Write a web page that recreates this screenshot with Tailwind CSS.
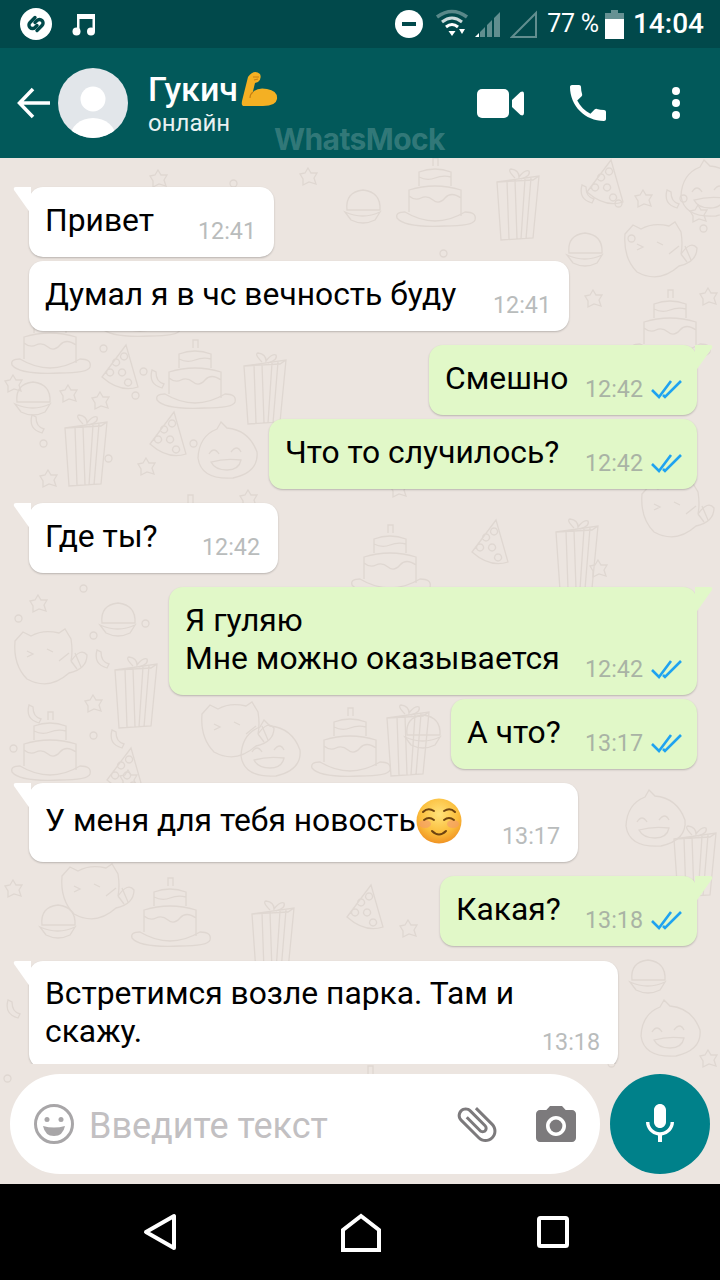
<!DOCTYPE html>
<html lang="ru">
  <head>
    <meta charset="UTF-8" />
    <meta name="viewport" content="width=device-width, initial-scale=1.0" />
    <title>WhatsMock</title>
    <script src="https://cdn.jsdelivr.net/npm/@tailwindcss/browser@4"></script>
  </head>
  <body class="w-[720px] h-[1280px] overflow-hidden flex flex-col bg-black font-[Roboto,sans-serif] text-black">
    <!-- status bar -->
    <div class="h-[48px] shrink-0 bg-[#01494b] flex items-center justify-between text-white">
      <div class="flex items-center pl-[20px]">
        <svg class="w-[32px] h-[32px]" viewBox="0 0 32 32" fill="none">
          <circle cx="16" cy="16" r="16" fill="#fff" />
          <path d="M15 9.500 10 14.500a3.500 3.500 0 0 0 0 5 3.500 3.500 0 0 0 5 0l2-2" stroke="#01494b" stroke-width="3.400" stroke-linecap="round" />
          <path d="M17 22.500 22 17.500a3.500 3.500 0 0 0 0-5 3.500 3.500 0 0 0-5 0l-2 2" stroke="#01494b" stroke-width="3.400" stroke-linecap="round" />
        </svg>
        <svg class="w-[24px] h-[24px] ml-[20px]" viewBox="0 0 24 24" fill="#fff">
          <path d="M5 2h18v17h-2.500V7H7.500v12H5z" />
          <circle cx="4.500" cy="19.500" r="4" />
          <circle cx="19" cy="19.500" r="4" />
        </svg>
      </div>
      <div class="flex items-center pr-[16px]">
        <svg class="w-[28px] h-[28px]" viewBox="0 0 28 28">
          <circle cx="14" cy="14" r="14" fill="#fff" />
          <rect x="7" y="12" width="14" height="4" fill="#01494b" />
        </svg>
        <svg class="w-[34px] h-[30px] ml-[12px]" viewBox="0 0 34 30" fill="none" stroke="#fff">
          <path d="M2 8Q17-3 32 8" stroke-width="3.500" stroke-opacity=".35" />
          <path d="M7 13Q17 5 27 13" stroke-width="3" stroke-opacity=".8" />
          <path d="M11 18Q17 13 23 18" stroke-width="3" />
          <path d="M13.500 22h7L17 27z" fill="#fff" stroke="none" />
          <path d="M24 20h6l-3 5z" fill="#fff" stroke="none" />
        </svg>
        <svg class="w-[30px] h-[30px] ml-[3px]" viewBox="0 0 30 30">
          <path d="M3 28h4v-4z" fill="#fff" />
          <path d="M8 28v-5l5-5v10zM15 28V16l5-5v17zM22 28V9l6-6v25z" fill="#fff" fill-opacity=".38" />
        </svg>
        <svg class="w-[28px] h-[30px] ml-[8px]" viewBox="0 0 28 30" fill="none">
          <path d="M2 28 26 4v24z" stroke="#fff" stroke-opacity=".38" stroke-width="2" />
        </svg>
        <span class="text-[25px] leading-[30px] ml-[9px] tracking-[-0.2px] whitespace-nowrap">77 %</span>
        <svg class="w-[19px] h-[29px] ml-[6px]" viewBox="0 0 19 29">
          <path d="M6 0h7v3h6v6H0V3h6z" fill="#fff" fill-opacity=".4" />
          <rect y="9" width="19" height="20" fill="#fff" />
        </svg>
        <span class="text-[28px] leading-[34px] font-medium ml-[9px]">14:04</span>
      </div>
    </div>

    <!-- header -->
    <div class="relative h-[110px] shrink-0 bg-[#02595a] flex items-center text-white">
      <svg class="w-[34px] h-[32px] ml-[17px] shrink-0" viewBox="0 0 34 32" fill="none" stroke="#fff" stroke-width="3.500">
        <path d="M33 16H3M16 2 2.500 16 16 30" />
      </svg>
      <svg class="w-[70px] h-[70px] ml-[7px] shrink-0" viewBox="0 0 70 70">
        <clipPath id="avatar"><circle cx="35" cy="35" r="35" /></clipPath>
        <circle cx="35" cy="35" r="35" fill="#e2e6ea" />
        <circle cx="35" cy="31" r="12.500" fill="#fff" />
        <ellipse cx="35" cy="70" rx="23" ry="20" fill="#fff" clip-path="url(#avatar)" />
      </svg>
      <div class="ml-[20px]">
        <div class="flex items-center h-[40px] text-[34px] leading-[40px] font-medium">
          Гукич
          <svg class="w-[38px] h-[38px] -mt-[3px] ml-[3px] shrink-0" viewBox="0 0 38 38">
            <path d="M7 8Q13 0 19 5 21 10 17 13L14 14Q12 22 12 23 17 18 26 20 37 22 36 30 35 37 22 37H3Q0 37 1 32Z" fill="#f4b023" />
            <path d="M12 8h6M13 11l4-1M12 23q-3 2-3 6" stroke="#c77f12" stroke-width="1.200" fill="none" />
          </svg>
        </div>
        <div class="text-[24px] leading-[28px] text-[#e9f1f1]">онлайн</div>
      </div>
      <svg class="w-[47px] h-[29px] ml-auto shrink-0" viewBox="0 0 47 29" fill="#fff">
        <rect width="32" height="29" rx="5" />
        <path d="M35 11 43.500 3Q47 1.500 47 5v19q0 3.500-3.500 2L35 18Z" />
      </svg>
      <svg class="w-[48px] h-[48px] ml-[40px] shrink-0" viewBox="0 0 24 24" fill="#fff">
        <path d="M6.620 10.790c1.440 2.830 3.760 5.140 6.590 6.590l2.200-2.200c.27-.27.67-.36 1.020-.24 1.120.37 2.330.57 3.570.57.55 0 1 .45 1 1V20c0 .55-.45 1-1 1-9.390 0-17-7.610-17-17 0-.55.45-1 1-1h3.500c.55 0 1 .45 1 1 0 1.250.2 2.450.57 3.570.11.350.03.74-.25 1.020l-2.200 2.200z" />
      </svg>
      <svg class="w-[10px] h-[34px] ml-[59px] mr-[39px] shrink-0" viewBox="0 0 10 34" fill="#fff">
        <circle cx="5" cy="5" r="4" />
        <circle cx="5" cy="17" r="4" />
        <circle cx="5" cy="29" r="4" />
      </svg>
      <span class="absolute left-[274px] top-[73px] text-[30px] leading-[36px] font-bold font-[Inter,sans-serif] tracking-[-0.6px] text-white/20">WhatsMock</span>
    </div>

    <!-- chat -->
    <div class="relative h-[1026px] shrink-0 bg-[#ece5e0] flex flex-col overflow-hidden">
      <!-- wallpaper doodles -->
      <svg class="absolute inset-0 w-[720px] h-[1026px]" viewBox="0 158 720 1026" fill="none" stroke="#dfd7d1" stroke-width="1.300">
        <defs>
          <g id="cake">
            <path d="M2 60Q0 54 10 54 40 72 70 54 82 54 80 62 78 68 50 68 10 70 2 60Z" />
            <path d="M14 54V32Q40 24 66 32V58M14 38q6 5 12 2t12 2 12-2 16 0M24 28V14Q40 8 56 14V28M24 19q8 4 16 1t16-1M38 8V0h5v8" />
          </g>
          <g id="gift">
            <path d="M2 14 44 8 38 70 6 72ZM12 13 14 71M20 12 22 71M30 11 26 71M36 10 31 71M2 14 38 12 44 8" />
            <path d="M20 10Q12 2 16 1 24 2 24 9 30 1 34 3 36 8 26 11" />
          </g>
          <g id="cat">
            <path d="M2 14 10 5 18 9Q30 2 46 6L52 2 58 12Q60 24 58 34 68 20 74 28 74 42 56 46 36 64 14 52 0 38 2 14Z" />
            <path d="M14 24l6 3-6 3M34 22l6 3M46 34l10-8M58 34l6 8M62 26l6 14" />
          </g>
          <g id="hat">
            <path d="M26 0 38 42Q20 48 2 32ZM16 14a3.500 3.500 0 1 0 .1 0M24 8a3.500 3.500 0 1 0 .1 0M10 24a3.500 3.500 0 1 0 .1 0M22 24a3.500 3.500 0 1 0 .1 0M28 34a3.500 3.500 0 1 0 .1 0" />
          </g>
          <g id="face">
            <path d="M24 0 30 6Q52 8 60 30 62 50 36 56 4 58 1 36 2 14 20 7Z" />
            <path d="M12 32q5-8 10 0M34 30q6-8 10 0M14 40q14-4 30-2-2 10-14 10T14 40Z" />
          </g>
          <g id="burger">
            <path d="M2 20Q0 2 18 0 36 2 35 20ZM0 22Q18 30 35 22L30 30Q18 36 6 30Z" />
          </g>
          <g id="star">
            <path d="M8 0 11 5 17 5 14 10 16 16 9 14 3 17 3 11 0 6 5 5Z" />
          </g>
          <g id="dot"><circle cx="3.500" cy="3.500" r="3.500" /></g>
          <g id="moon"><path d="M2 0Q-2 14 12 18L14 14Q6 12 6 2Z" /></g>
        </defs>
        <use href="#cake" x="10" y="305" /><use href="#hat" x="100" y="345" /><use href="#cake" x="155" y="340" /><use href="#gift" x="242" y="352" />
        <use href="#burger" x="15" y="382" /><use href="#gift" x="63" y="414" /><use href="#hat" x="148" y="412" /><use href="#face" x="197" y="422" />
        <use href="#cake" x="150" y="495" /><use href="#cat" x="13" y="627" /><use href="#burger" x="100" y="603" /><use href="#gift" x="113" y="656" />
        <use href="#cake" x="10" y="712" /><use href="#hat" x="105" y="748" /><use href="#cake" x="310" y="708" /><use href="#gift" x="385" y="704" />
        <use href="#cat" x="200" y="700" /><use href="#face" x="240" y="720" /><use href="#burger" x="405" y="715" /><use href="#burger" x="567" y="233" />
        <use href="#cat" x="623" y="220" /><use href="#cake" x="630" y="290" /><use href="#face" x="680" y="160" /><use href="#hat" x="585" y="160" />
        <use href="#cake" x="395" y="158" /><use href="#gift" x="495" y="168" /><use href="#cat" x="285" y="262" /><use href="#hat" x="425" y="268" />
        <use href="#burger" x="345" y="190" /><use href="#cake" x="100" y="268" /><use href="#gift" x="554" y="518" /><use href="#hat" x="470" y="520" />
        <use href="#cat" x="640" y="480" /><use href="#cake" x="350" y="525" /><use href="#face" x="625" y="790" /><use href="#gift" x="672" y="825" />
        <use href="#cake" x="130" y="878" /><use href="#burger" x="40" y="905" /><use href="#gift" x="250" y="900" /><use href="#hat" x="345" y="885" />
        <use href="#cat" x="60" y="862" /><use href="#face" x="640" y="1000" /><use href="#burger" x="630" y="960" /><use href="#cake" x="330" y="1066" />
        <use href="#star" x="5" y="375" /><use href="#star" x="60" y="385" /><use href="#star" x="92" y="392" /><use href="#star" x="138" y="458" />
        <use href="#star" x="40" y="470" /><use href="#star" x="85" y="695" /><use href="#star" x="30" y="595" /><use href="#star" x="635" y="190" />
        <use href="#star" x="690" y="205" /><use href="#star" x="585" y="290" /><use href="#star" x="700" y="288" /><use href="#star" x="300" y="168" />
        <use href="#star" x="150" y="170" /><use href="#star" x="240" y="490" /><use href="#star" x="390" y="480" /><use href="#star" x="590" y="560" />
        <use href="#star" x="120" y="770" /><use href="#star" x="5" y="880" /><use href="#star" x="400" y="920" /><use href="#star" x="700" y="1050" />
        <use href="#moon" x="150" y="370" /><use href="#moon" x="30" y="415" /><use href="#moon" x="27" y="705" /><use href="#moon" x="95" y="650" />
        <use href="#moon" x="665" y="190" /><use href="#moon" x="580" y="185" /><use href="#moon" x="110" y="730" /><use href="#moon" x="6" y="1000" />
        <use href="#dot" x="100" y="345" /><use href="#dot" x="140" y="368" /><use href="#dot" x="132" y="392" /><use href="#dot" x="40" y="440" />
        <use href="#dot" x="105" y="455" /><use href="#dot" x="190" y="440" /><use href="#dot" x="80" y="585" /><use href="#dot" x="15" y="615" />
        <use href="#dot" x="90" y="632" /><use href="#dot" x="142" y="620" /><use href="#dot" x="10" y="745" /><use href="#dot" x="90" y="732" />
        <use href="#dot" x="700" y="225" /><use href="#dot" x="615" y="200" /><use href="#dot" x="628" y="235" /><use href="#dot" x="680" y="195" />
        <use href="#dot" x="4" y="1075" /><use href="#dot" x="608" y="1060" /><use href="#dot" x="230" y="180" /><use href="#dot" x="440" y="250" />
      </svg>

      <!-- messages -->
      <div class="relative flex-1 min-h-0 overflow-hidden pt-[29px] px-[23px] flex flex-col">
        <!-- incoming -->
        <div class="relative self-start ml-[6px] w-[245px] flex items-end justify-between pl-[16px] pr-[18px] pt-[14px] pb-[11px] rounded-[14px] bg-white shadow-[0_1px_2px_rgba(0,0,0,0.22)]">
          <svg class="absolute -left-[16px] top-0 w-[18px] h-[28px]" viewBox="0 0 18 28" fill="#fff"><path d="M18 0H3Q0 0 1 3L18 27Z" /></svg>
          <span class="text-[31.8px] leading-[38px] mb-[7px] whitespace-nowrap">Привет</span>
          <span class="text-[23.3px] leading-[30px] text-[#b9bcbc]">12:41</span>
        </div>
        <div class="self-start mt-[4px] ml-[6px] w-[540px] flex items-end justify-between pl-[16px] pr-[18px] pt-[14px] pb-[11px] rounded-[14px] bg-white shadow-[0_1px_2px_rgba(0,0,0,0.22)]">
          <span class="text-[31.8px] leading-[38px] mb-[7px] whitespace-nowrap">Думал я в чс вечность буду</span>
          <span class="text-[23.3px] leading-[30px] text-[#b9bcbc]">12:41</span>
        </div>

        <!-- outgoing -->
        <div class="relative self-end mt-[14px] w-[268px] flex items-end justify-between pl-[16px] pr-[15px] pt-[14px] pb-[11px] rounded-[14px] bg-[#e1f8c8] shadow-[0_1px_2px_rgba(0,0,0,0.22)]">
          <svg class="absolute -right-[16px] top-0 w-[18px] h-[28px]" viewBox="0 0 18 28" fill="#e1f8c8"><path d="M0 0H15Q18 0 17 3L0 27Z" /></svg>
          <span class="text-[31.8px] leading-[38px] mb-[7px] whitespace-nowrap">Смешно</span>
          <span class="flex items-center gap-[8px] text-[23.3px] leading-[30px] text-[#a9b3a5]">12:42
            <svg class="w-[31px] h-[20px]" viewBox="0 0 31 20" fill="none" stroke="#1fa3f0" stroke-width="2.600"><path d="M1 11 8 18 20 2M12 16 14 18 30 2" /></svg>
          </span>
        </div>
        <div class="self-end mt-[4px] w-[428px] flex items-end justify-between pl-[16px] pr-[15px] pt-[14px] pb-[11px] rounded-[14px] bg-[#e1f8c8] shadow-[0_1px_2px_rgba(0,0,0,0.22)]">
          <span class="text-[31.8px] leading-[38px] mb-[7px] whitespace-nowrap">Что то случилось?</span>
          <span class="flex items-center gap-[8px] text-[23.3px] leading-[30px] text-[#a9b3a5]">12:42
            <svg class="w-[31px] h-[20px]" viewBox="0 0 31 20" fill="none" stroke="#1fa3f0" stroke-width="2.600"><path d="M1 11 8 18 20 2M12 16 14 18 30 2" /></svg>
          </span>
        </div>

        <div class="relative self-start mt-[14px] ml-[6px] w-[249px] flex items-end justify-between pl-[16px] pr-[18px] pt-[14px] pb-[11px] rounded-[14px] bg-white shadow-[0_1px_2px_rgba(0,0,0,0.22)]">
          <svg class="absolute -left-[16px] top-0 w-[18px] h-[28px]" viewBox="0 0 18 28" fill="#fff"><path d="M18 0H3Q0 0 1 3L18 27Z" /></svg>
          <span class="text-[31.8px] leading-[38px] mb-[7px] whitespace-nowrap">Где ты?</span>
          <span class="text-[23.3px] leading-[30px] text-[#b9bcbc]">12:42</span>
        </div>

        <div class="relative self-end mt-[14px] w-[528px] flex items-end justify-between pl-[16px] pr-[15px] pt-[14px] pb-[11px] rounded-[14px] bg-[#e1f8c8] shadow-[0_1px_2px_rgba(0,0,0,0.22)]">
          <svg class="absolute -right-[16px] top-0 w-[18px] h-[28px]" viewBox="0 0 18 28" fill="#e1f8c8"><path d="M0 0H15Q18 0 17 3L0 27Z" /></svg>
          <span class="text-[31.8px] leading-[38px] mb-[7px] whitespace-nowrap">Я гуляю<br />Мне можно оказывается</span>
          <span class="flex items-center gap-[8px] text-[23.3px] leading-[30px] text-[#a9b3a5]">12:42
            <svg class="w-[31px] h-[20px]" viewBox="0 0 31 20" fill="none" stroke="#1fa3f0" stroke-width="2.600"><path d="M1 11 8 18 20 2M12 16 14 18 30 2" /></svg>
          </span>
        </div>
        <div class="self-end mt-[4px] w-[246px] flex items-end justify-between pl-[16px] pr-[15px] pt-[14px] pb-[11px] rounded-[14px] bg-[#e1f8c8] shadow-[0_1px_2px_rgba(0,0,0,0.22)]">
          <span class="text-[31.8px] leading-[38px] mb-[7px] whitespace-nowrap">А что?</span>
          <span class="flex items-center gap-[8px] text-[23.3px] leading-[30px] text-[#a9b3a5]">13:17
            <svg class="w-[31px] h-[20px]" viewBox="0 0 31 20" fill="none" stroke="#1fa3f0" stroke-width="2.600"><path d="M1 11 8 18 20 2M12 16 14 18 30 2" /></svg>
          </span>
        </div>

        <div class="relative self-start mt-[14px] ml-[6px] w-[549px] flex items-end justify-between pl-[16px] pr-[18px] pt-[14px] pb-[11px] rounded-[14px] bg-white shadow-[0_1px_2px_rgba(0,0,0,0.22)]">
          <svg class="absolute -left-[16px] top-0 w-[18px] h-[28px]" viewBox="0 0 18 28" fill="#fff"><path d="M18 0H3Q0 0 1 3L18 27Z" /></svg>
          <span class="flex items-center text-[31.8px] leading-[47px] mb-[7px] whitespace-nowrap">У меня для тебя новость
            <svg class="w-[46px] h-[46px] shrink-0" viewBox="0 0 46 46">
              <defs>
                <radialGradient id="smile" cx="0.500" cy="0.350" r="0.700">
                  <stop offset="0" stop-color="#ffe27a" />
                  <stop offset="0.600" stop-color="#fbbe3c" />
                  <stop offset="1" stop-color="#ee8a1e" />
                </radialGradient>
              </defs>
              <circle cx="23" cy="23" r="22.500" fill="url(#smile)" />
              <ellipse cx="9" cy="26" rx="6" ry="4" fill="#f49a6e" opacity=".6" />
              <ellipse cx="37" cy="26" rx="6" ry="4" fill="#f49a6e" opacity=".6" />
              <path d="M7 14q5-5 11-1M28 13q6-4 11 1M8 22q5-4 10 0M28 22q5-4 10 0M16 33q7 7 14 0" fill="none" stroke="#6e4310" stroke-width="2" stroke-linecap="round" />
            </svg>
          </span>
          <span class="text-[23.3px] leading-[30px] text-[#b9bcbc]">13:17</span>
        </div>

        <div class="relative self-end mt-[14px] w-[257px] flex items-end justify-between pl-[16px] pr-[15px] pt-[14px] pb-[11px] rounded-[14px] bg-[#e1f8c8] shadow-[0_1px_2px_rgba(0,0,0,0.22)]">
          <svg class="absolute -right-[16px] top-0 w-[18px] h-[28px]" viewBox="0 0 18 28" fill="#e1f8c8"><path d="M0 0H15Q18 0 17 3L0 27Z" /></svg>
          <span class="text-[31.8px] leading-[38px] mb-[7px] whitespace-nowrap">Какая?</span>
          <span class="flex items-center gap-[8px] text-[23.3px] leading-[30px] text-[#a9b3a5]">13:18
            <svg class="w-[31px] h-[20px]" viewBox="0 0 31 20" fill="none" stroke="#1fa3f0" stroke-width="2.600"><path d="M1 11 8 18 20 2M12 16 14 18 30 2" /></svg>
          </span>
        </div>

        <div class="relative self-start shrink-0 mt-[15px] ml-[6px] w-[589px] flex items-end justify-between pl-[16px] pr-[18px] pt-[14px] pb-[11px] rounded-[14px] bg-white shadow-[0_1px_2px_rgba(0,0,0,0.22)]">
          <svg class="absolute -left-[16px] top-0 w-[18px] h-[28px]" viewBox="0 0 18 28" fill="#fff"><path d="M18 0H3Q0 0 1 3L18 27Z" /></svg>
          <span class="text-[31.8px] leading-[38px] mb-[7px] -mt-[1px] whitespace-nowrap">Встретимся возле парка. Там и<br />скажу.</span>
          <span class="text-[23.3px] leading-[30px] text-[#b9bcbc]">13:18</span>
        </div>
      </div>

      <!-- input row -->
      <div class="relative shrink-0 flex gap-[10px] px-[10px] pt-[10px] pb-[10px]">
        <div class="w-[590px] h-[100px] rounded-full bg-white flex items-center pl-[24px]">
          <svg class="w-[40px] h-[40px] shrink-0" viewBox="0 0 40 40" fill="none">
            <circle cx="20" cy="20" r="18.500" stroke="#a8a6a8" stroke-width="3" />
            <circle cx="13" cy="15.500" r="2.500" fill="#a8a6a8" />
            <circle cx="27" cy="15.500" r="2.500" fill="#a8a6a8" />
            <path d="M9 22q11 3 22 0-2 10-11 10T9 22Z" fill="#a8a6a8" />
          </svg>
          <span class="ml-[15px] mt-[3px] text-[36px] leading-[44px] text-[#c2c0c2] whitespace-nowrap">Введите текст</span>
          <svg class="w-[48px] h-[48px] ml-auto shrink-0" viewBox="0 0 24 24" fill="#7c7a7c">
            <path transform="rotate(-45 12 12)" d="M16.500 6v11.500c0 2.210-1.790 4-4 4s-4-1.790-4-4V5c0-1.380 1.120-2.500 2.500-2.500s2.500 1.120 2.500 2.500v10.500c0 .55-.45 1-1 1s-1-.45-1-1V6H10v9.500c0 1.380 1.120 2.500 2.500 2.500s2.500-1.120 2.500-2.500V5c0-2.210-1.790-4-4-4S7 2.790 7 5v12.500c0 3.040 2.460 5.500 5.500 5.500s5.500-2.460 5.500-5.500V6h-1.500z" />
          </svg>
          <svg class="w-[40px] h-[36px] ml-[35px] mr-[24px] shrink-0" viewBox="2 2 20 18" fill="#7c7a7c">
            <path d="M9 2L7.170 4H4c-1.100 0-2 .9-2 2v12c0 1.100.9 2 2 2h16c1.100 0 2-.9 2-2V6c0-1.100-.9-2-2-2h-3.170L15 2H9zm3 15c-2.760 0-5-2.240-5-5s2.240-5 5-5 5 2.240 5 5-2.240 5-5 5z" />
            <circle cx="12" cy="12" r="3.200" />
          </svg>
        </div>
        <div class="w-[100px] h-[100px] rounded-full bg-[#00818a] flex items-center justify-center">
          <svg class="w-[48px] h-[48px]" viewBox="0 0 24 24" fill="#fff">
            <path d="M12 14c1.660 0 3-1.340 3-3V5c0-1.660-1.340-3-3-3S9 3.340 9 5v6c0 1.660 1.340 3 3 3zm5.300-3c0 3-2.540 5.100-5.300 5.100S6.700 14 6.700 11H5c0 3.410 2.720 6.230 6 6.720V21h2v-3.280c3.280-.48 6-3.300 6-6.720h-1.700z" />
          </svg>
        </div>
      </div>
    </div>

    <!-- nav bar -->
    <div class="h-[96px] shrink-0 bg-black flex items-center">
      <svg class="w-[34px] h-[38px] ml-[143px] shrink-0" viewBox="0 0 34 38" fill="none" stroke="#fff" stroke-width="4" stroke-linejoin="round"><path d="M31 3V35L3 19Z" /></svg>
      <svg class="w-[40px] h-[40px] ml-[164px] mt-[2px] shrink-0" viewBox="0 0 40 40" fill="none" stroke="#fff" stroke-width="4"><path d="M2 37V17L20 3 38 17V37Z" /></svg>
      <svg class="w-[32px] h-[32px] ml-[156px] shrink-0" viewBox="0 0 32 32" fill="none" stroke="#fff" stroke-width="4"><rect x="2" y="2" width="28" height="28" rx="1.500" /></svg>
    </div>
  </body>
</html>
